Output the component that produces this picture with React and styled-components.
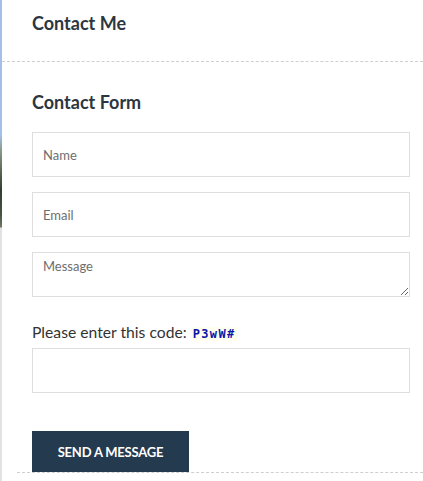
import React from "react";
import styled, { createGlobalStyle } from "styled-components";

const GlobalStyle = createGlobalStyle`
  * {
    margin: 0;
    padding: 0;
    box-sizing: border-box;
  }
  body {
    background: #fff;
    font-family: Lato, "Liberation Sans", sans-serif;
    color: #2b2b2b;
  }
`;

const Page = styled.div`
  display: flex;
  width: 423px;
  height: 481px;
  overflow: hidden;
`;

const Strip = styled.div`
  width: 2px;
  flex: none;
  background: linear-gradient(
    to bottom,
    #a3bfeb 0px,
    #a3c0e8 135px,
    #8a9a8c 150px,
    #5d6a55 170px,
    #323d30 190px,
    #4a5444 215px,
    #6f7866 227px,
    #e2e2e2 228px,
    #e2e2e2 100%
  );
`;

const Panel = styled.div`
  flex: 1;
  display: flex;
  flex-direction: column;
`;

const Header = styled.div`
  height: 62px;
  padding: 12px 0 0 30px;
  border-bottom: 1px dashed #cfcfcf;
`;

const Heading = styled.h2`
  font-size: 18px;
  font-weight: 700;
  color: #2c3640;
  line-height: 22px;
`;

const Body = styled.div`
  padding: 29px 13px 0 30px;
  display: flex;
  flex-direction: column;
`;

const Form = styled.form`
  display: flex;
  flex-direction: column;
  gap: 15px;
  margin-top: 19px;
`;

const Field = styled.input`
  width: 378px;
  height: 45px;
  border: 1px solid #dedede;
  padding: 0 10px;
  font-family: Lato, "Liberation Sans", sans-serif;
  font-size: 13px;
  color: #333;
  outline: none;
  &::placeholder {
    color: #6e6e6e;
  }
`;

const Area = styled.textarea`
  width: 378px;
  height: 45px;
  border: 1px solid #dedede;
  padding: 5px 10px;
  font-family: Lato, "Liberation Sans", sans-serif;
  font-size: 13px;
  outline: none;
  resize: vertical;
  &::placeholder {
    color: #6e6e6e;
  }
`;

const CodeLabel = styled.div`
  margin-top: 11px;
  font-size: 15.7px;
  color: #333;
  display: flex;
  align-items: flex-end;
  gap: 5px;
  line-height: 18px;
`;

const Captcha = styled.span`
  font-family: "DejaVu Sans Mono", monospace;
  font-weight: 700;
  font-size: 12px;
  letter-spacing: 1.4px;
  color: #0a16a8;
  background: #fffff0;
  padding: 0 1px;
  line-height: 14px;
`;

const CodeField = styled(Field)`
  margin-top: -8px;
`;

const Button = styled.button`
  margin-top: 23px;
  width: 157px;
  height: 41px;
  border: none;
  background: #243a4f;
  color: #fff;
  font-family: Lato, "Liberation Sans", sans-serif;
  font-weight: 700;
  font-size: 13px;
  letter-spacing: -0.2px;
  cursor: pointer;
`;

const Footer = styled.div`
  margin-left: 15px;
  border-bottom: 1px dashed #cfcfcf;
`;

export default function App() {
  return (
    <>
      <GlobalStyle />
      <Page>
        <Strip />
        <Panel>
          <Header>
            <Heading>Contact Me</Heading>
          </Header>
          <Body>
            <Heading>Contact Form</Heading>
            <Form onSubmit={(e) => e.preventDefault()}>
              <Field placeholder="Name" />
              <Field placeholder="Email" />
              <Area placeholder="Message" />
              <CodeLabel>
                Please enter this code: <Captcha>P3wW#</Captcha>
              </CodeLabel>
              <CodeField />
              <Button type="submit">SEND A MESSAGE</Button>
            </Form>
          </Body>
          <Footer />
        </Panel>
      </Page>
    </>
  );
}
